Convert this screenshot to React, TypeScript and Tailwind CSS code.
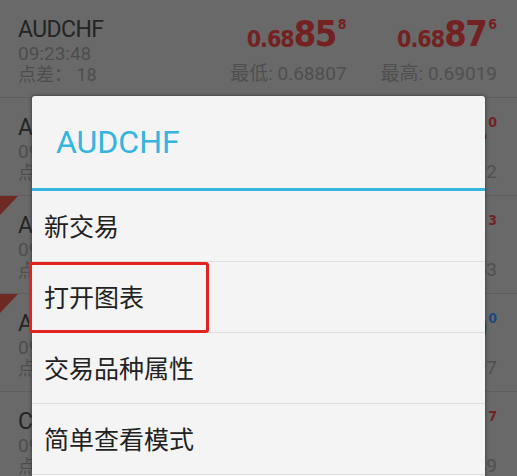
import React from "react";

type Quote = {
  symbol: string;
  time: string;
  spread: number;
  bid: [string, string, string];
  ask: [string, string, string];
  low: string;
  high: string;
  color: string;
  flag?: boolean;
};

const quotes: Quote[] = [
  { symbol: "AUDCHF", time: "09:23:48", spread: 18, bid: ["0.68", "85", "8"], ask: ["0.68", "87", "6"], low: "0.68807", high: "0.69019", color: "text-[#732121]" },
  { symbol: "AUDNZD", time: "09:23:48", spread: 30, bid: ["1.04", "61", "0"], ask: ["1.04", "64", "0"], low: "1.04412", high: "1.04712", color: "text-[#732121]" },
  { symbol: "AUDUSD", time: "09:23:47", spread: 13, bid: ["0.76", "22", "0"], ask: ["0.76", "23", "3"], low: "0.76081", high: "0.76453", color: "text-[#732121]", flag: true },
  { symbol: "AUDJPY", time: "09:23:47", spread: 20, bid: ["84.0", "18", "0"], ask: ["84.0", "20", "0"], low: "83.875", high: "84.297", color: "text-[#1d4a80]", flag: true },
  { symbol: "CADCHF", time: "09:23:46", spread: 30, bid: ["0.73", "34", "7"], ask: ["0.73", "37", "7"], low: "0.73102", high: "0.73549", color: "text-[#732121]" },
];

const sans = "font-['Roboto','Liberation_Sans',sans-serif]";
const cjk = "font-['Roboto','Noto_Sans_CJK_SC',sans-serif]";
const cond = "font-['DejaVu_Sans_Condensed','Roboto',sans-serif]";

function Price({ parts, color }: { parts: [string, string, string]; color: string }) {
  return (
    <div className={`flex items-start font-bold ${cond} ${color} leading-none`}>
      <span className="text-[23px] mt-[12px] tracking-[-1px]">{parts[0]}</span>
      <span className="text-[36px] tracking-[-1.5px]">{parts[1]}</span>
      <span className="text-[14px] mt-[1px] ml-[2px]">{parts[2]}</span>
    </div>
  );
}

function QuoteRow({ q }: { q: Quote }) {
  return (
    <div className="relative h-[98px] border-b border-[#5e5e5e] flex">
      {q.flag && (
        <svg className="absolute left-0 top-0" width="18" height="19" viewBox="0 0 18 19">
          <polygon points="0,0 18,0 0,19" fill="#6e2a22" />
        </svg>
      )}
      <div className="pl-[18px] pt-[17px] flex flex-col">
        <span className={`${sans} text-[23px] leading-[26px] text-[#242424] tracking-[-0.6px]`}>{q.symbol}</span>
        <span className={`${sans} text-[19px] leading-[21px] text-[#4d4d4d]`}>{q.time}</span>
        <span className={`${cjk} text-[18px] leading-[21px] text-[#4d4d4d]`}>点差：&nbsp;{q.spread}</span>
      </div>
      <div className="flex-1 flex justify-end pr-[20px] pt-[16px] gap-[34px]">
        <div className="flex flex-col items-end">
          <Price parts={q.bid} color={q.color} />
          <span className={`${cjk} text-[19px] leading-[20px] text-[#4f4f4f] mt-[12px]`}>最低: {q.low}</span>
        </div>
        <div className="flex flex-col items-end">
          <Price parts={q.ask} color={q.color} />
          <span className={`${cjk} text-[19px] leading-[20px] text-[#4f4f4f] mt-[12px]`}>最高: {q.high}</span>
        </div>
      </div>
    </div>
  );
}

const menuItems = ["新交易", "打开图表", "交易品种属性", "简单查看模式"];

export default function App() {
  return (
    <div className="relative w-[517px] h-[476px] overflow-hidden bg-[#696969]">
      <div className="flex flex-col">
        {quotes.map((q) => (
          <QuoteRow key={q.symbol} q={q} />
        ))}
      </div>

      {/* context dialog */}
      <div className="absolute left-[32px] top-[96px] w-[453px] h-[400px] rounded-[3px] bg-[#f4f4f4] shadow-[0_0_3px_1px_rgba(40,40,40,0.5)] flex flex-col">
        <div className={`h-[92px] flex items-center pl-[24px] ${sans} text-[32px] text-[#35b4e0]`}>AUDCHF</div>
        <div className="h-[3px] bg-[#35b4e0]" />
        {menuItems.map((item) => (
          <div
            key={item}
            className={`h-[71px] shrink-0 border-b border-[#dedede] flex items-center pl-[12px] pt-[3px] ${cjk} text-[25px] text-[#222222]`}
          >
            {item}
          </div>
        ))}
      </div>

      {/* highlight box */}
      <div className="absolute left-[29px] top-[262px] w-[180px] h-[71px] border-[3px] border-[#e3231f] rounded-[3px]" />
    </div>
  );
}
